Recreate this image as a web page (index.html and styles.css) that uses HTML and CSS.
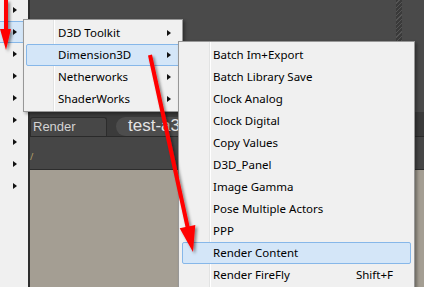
FILE: index.html
```html
<!DOCTYPE html>
<html lang="en">
<head>
    <meta charset="UTF-8">
    <title>Scripts menu</title>
    <link rel="stylesheet" href="styles.css">
</head>
<body>
    <div class="screen">
        <!-- parent menu, only its arrow column is visible -->
        <div class="side-menu">
            <div class="side-item"><span class="arrow"></span></div>
            <div class="side-item active"><span class="arrow"></span></div>
            <div class="side-item"><span class="arrow"></span></div>
            <div class="side-item"><span class="arrow"></span></div>
            <div class="side-item"><span class="arrow"></span></div>
            <div class="side-item"><span class="arrow"></span></div>
            <div class="side-item"><span class="arrow"></span></div>
            <div class="side-item"><span class="arrow"></span></div>
            <div class="side-item"><span class="arrow"></span></div>
        </div>

        <div class="app">
            <div class="app-top"><div class="grip"></div></div>
            <div class="tab-bar">
                <div class="tab">Render</div>
                <div class="pill">test-a3-</div>
            </div>
            <div class="tool-strip"><span class="mark">/</span></div>
            <div class="viewport"></div>
        </div>
    </div>

    <div class="menu menu-vendors">
        <div class="item has-sub">D3D Toolkit</div>
        <div class="item has-sub active">Dimension3D</div>
        <div class="item has-sub">Netherworks</div>
        <div class="item has-sub">ShaderWorks</div>
    </div>

    <div class="menu menu-scripts">
        <div class="item">Batch Im+Export</div>
        <div class="item">Batch Library Save</div>
        <div class="item">Clock Analog</div>
        <div class="item">Clock Digital</div>
        <div class="item">Copy Values</div>
        <div class="item">D3D_Panel</div>
        <div class="item">Image Gamma</div>
        <div class="item">Pose Multiple Actors</div>
        <div class="item">PPP</div>
        <div class="item active">Render Content</div>
        <div class="item">Render FireFly<span class="shortcut">Shift+F</span></div>
    </div>

    <!-- red annotation arrows -->
    <svg class="marks" width="424" height="287" viewBox="0 0 424 287">
        <defs>
            <filter id="shade" x="-50%" y="-50%" width="200%" height="200%">
                <feDropShadow dx="2" dy="2" stdDeviation="1.5" flood-color="#000" flood-opacity="0.45"/>
            </filter>
        </defs>
        <g fill="#ff0000" filter="url(#shade)">
            <polygon points="4,0 8,0 8,29 11,29 6,50 0,29 4,29"/>
            <polygon points="148,55.5 152,54.5 189.5,226.2 195.3,224.9 193,252 179.7,228.3 185.5,227.1"/>
        </g>
    </svg>
</body>
</html>
```

FILE: styles.css
```css
body {
    margin: 0;
    width: 424px;
    height: 287px;
    overflow: hidden;
    position: relative;
    font-family: "Noto Sans", "Liberation Sans", sans-serif;
    font-size: 11.5px;
    color: #000;
}

.screen {
    display: flex;
    height: 287px;
}

/* Parent menu on the left edge */
.side-menu {
    width: 28px;
    background-color: #f0f0f0;
    display: flex;
    flex-direction: column;
    margin-top: -1px;
}
.side-item {
    height: 22px;
    box-sizing: border-box;
    display: flex;
    align-items: center;
    padding-left: 13px;
}
.side-item.active {
    background-color: #d4e6f8;
    border: 1px solid #86b7e9;
    border-left: none;
    padding-left: 13px;
}

.arrow {
    width: 0;
    height: 0;
    border-left: 4px solid #111;
    border-top: 3.5px solid transparent;
    border-bottom: 3.5px solid transparent;
}

/* Application behind the menus */
.app {
    flex: 1;
    display: flex;
    flex-direction: column;
    border-left: 2px solid #2e2e2e;
}
.app-top {
    height: 112px;
    background-color: #4a4a4a;
    display: flex;
    justify-content: flex-end;
}
.grip {
    width: 6px;
    margin-right: 22px;
    background: repeating-linear-gradient(135deg, #3a3a3a 0 2px, #555 2px 3px);
}
.tab-bar {
    height: 25px;
    box-sizing: border-box;
    background-color: #3b3b3b;
    border-bottom: 1px solid #2a2a2a;
    display: flex;
    align-items: flex-end;
    gap: 9px;
    padding-top: 6px;
}
.tab {
    width: 77px;
    height: 19px;
    box-sizing: border-box;
    background-color: #474747;
    border: 1px solid #2c2c2c;
    border-bottom: none;
    border-radius: 3px 3px 0 0;
    padding-left: 2px;
    font-family: "Liberation Sans", sans-serif;
    font-size: 13px;
    line-height: 18px;
    color: #d4d4d4;
}
.pill {
    height: 19px;
    align-self: flex-start;
    margin-top: -1px;
    background-color: #4d4d4d;
    border-radius: 10px;
    padding: 0 20px 0 12px;
    font-family: "Liberation Sans", sans-serif;
    font-size: 17px;
    line-height: 17px;
    color: #e4e4e4;
}
.tool-strip {
    height: 32px;
    background-color: #464646;
    border-bottom: 1px solid #2d2d2d;
}
.mark {
    display: block;
    font-size: 9px;
    color: #b8a26a;
    margin-top: 13px;
}
.viewport {
    flex: 1;
    background-color: #a49e93;
}

/* Popup menus */
.menu {
    position: absolute;
    box-sizing: border-box;
    background-color: #f0f0f0;
    border: 1px solid #979797;
    box-shadow: 2px 2px 3px rgba(0, 0, 0, 0.35);
}
.menu-vendors {
    left: 23px;
    top: 19px;
    width: 160px;
    padding: 2px 2px 1px;
    background: linear-gradient(to right, transparent 29px, #e2e3e3 29px, #e2e3e3 30px, #fff 30px, #fff 31px, transparent 31px), #f0f0f0;
    z-index: 1;
}
.menu-scripts {
    left: 178px;
    top: 41px;
    width: 237px;
    height: 260px;
    padding: 2px 3px;
    background: linear-gradient(to right, transparent 30px, #e2e3e3 30px, #e2e3e3 31px, #fff 31px, #fff 32px, transparent 32px), #f0f0f0;
    z-index: 2;
}
.item {
    height: 22px;
    box-sizing: border-box;
    border: 1px solid transparent;
    border-radius: 2px;
    display: flex;
    align-items: center;
    line-height: 20px;
}
.menu-vendors .item {
    padding-left: 31px;
    padding-right: 8px;
}
.menu-scripts .item {
    padding-left: 30px;
    padding-right: 17px;
}
.item.active {
    background-color: #d4e6f8;
    border-color: #86b7e9;
}
.item.has-sub::after {
    content: "";
    margin-left: auto;
    border-left: 4px solid #111;
    border-top: 3.5px solid transparent;
    border-bottom: 3.5px solid transparent;
}
.shortcut {
    margin-left: auto;
}

.marks {
    position: absolute;
    left: 0;
    top: 0;
    pointer-events: none;
    z-index: 3;
}
```
